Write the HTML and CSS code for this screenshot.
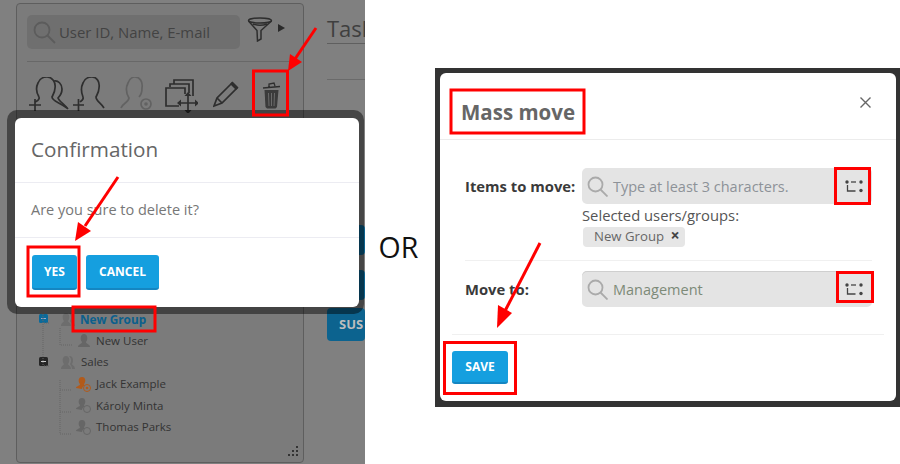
FILE: index.html
```html
<!DOCTYPE html>
<html lang="en">
<head>
<meta charset="utf-8">
<title>Delete or mass move</title>
<link rel="stylesheet" href="styles.css">
</head>
<body>
<div class="stage">
  <section class="shot">
    <aside class="card">
      <div class="search-row">
        <div class="search">
          <svg class="glass" width="24" height="24" viewBox="0 0 24 24"><circle cx="10" cy="10" r="7.500"/><path d="M15.500 15.500 23 23"/></svg>
          <span>User ID, Name, E-mail</span>
        </div>
        <svg class="funnel" width="26" height="25" viewBox="0 0 26 25"><ellipse cx="13" cy="3.500" rx="11.500" ry="2.600"/><path d="M1.500 4 10 13.500 10.500 24 14 22V13.500L24.500 4"/><path d="M6 7Q13 9.500 20 7"/></svg>
        <span class="tri"></span>
      </div>
      <div class="card-rule"></div>
      <div class="tools">
        <svg class="tool" width="40" height="37" viewBox="0 0 40 37"><path d="M0 28h12M6 22v12"/><path d="M10 20C7 15 7 10 9 6 11 1 15 0 18 0c5 0 9 5 8 11 0 4-2 7-3 9 0 4 7 5 15 11"/><path d="M10 20c1 3-2 4-4 5"/><path d="M25 4c4-1 8 3 8 8 0 4-2 7-4 9 1 3 6 6 10 11"/></svg>
        <svg class="tool t2" width="34" height="37" viewBox="0 0 34 37"><path d="M1 28h11M6.500 22v12"/><path d="M11 20C9 15 9 10 11 6c2-5 6-6 9-6 5 0 8 5 7 11 0 4-2 7-3 9 0 4 5 6 8 11"/><path d="M11 20c1 3-2 4-3 5"/></svg>
        <svg class="tool faded" width="32" height="37" viewBox="0 0 32 37"><path d="M1 31C3 26 9 25 9 21 6 16 6 10 8 6c2-5 5-6 7-6 5 0 8 5 7 11 0 4-1 7-3 9"/><circle cx="26" cy="27" r="5"/><circle class="dot" cx="26" cy="27" r="1.800"/></svg>
        <svg class="tool move" width="33" height="34" viewBox="0 0 33 34"><path d="M9 5V1h19v16"/><path d="M5 8V5h19v9"/><path d="M14 27H1V9h19v6"/><path d="M23 16v17M14 24h18"/><path class="fill" d="M23 13l-3.500 4h7zM23 35l-3.500-4h7zM12 24l4-3.500v7zM34 24l-4-3.500v7z"/></svg>
        <svg class="tool pencil" width="26" height="28" viewBox="0 0 26 28"><path d="M19 3 4 18l-3 8 8-3L24 8z"/><path d="M4 18l5 5"/><path class="fill" d="M19.500 1.500 25.500 7.500 23 10 17 4z"/></svg>
        <svg class="trash" width="19" height="27" viewBox="0 0 19 27"><path d="M1 6 18 4.500M7 5V2l5-1 1 3" fill="none"/><path class="fill" d="M2.500 8h14l-1.500 17-1.500 1.500h-8.500L3.500 25z"/><path class="slot" d="M6.500 11l.5 13M9.500 11v13M12.500 11l-.5 13"/></svg>
      </div>
      <ul class="tree">
        <li class="node group open-blue">
          <span class="box"></span>
          <svg class="gico" width="17" height="14" viewBox="0 0 17 14"><path d="M3 14c0-3 3-4 3-5-2-2-2-8 2-8s4 6 2 8c0 1 3 2 3 5zM11 1c4-1 5 5 3 8 0 1 3 2 3 5h-3c0-3-2-4-2-5 2-3 1-6-1-8z"/></svg>
          <strong>New Group</strong>
        </li>
        <li class="node user">
          <svg class="uico" width="14" height="14" viewBox="0 0 14 14"><path d="M1 14c0-3 4-3 4-5-2-2-2-8 2-8s4 6 2 8c0 2 4 2 4 5z"/></svg>
          <span>New User</span>
        </li>
        <li class="node group">
          <span class="box dark"></span>
          <svg class="gico" width="17" height="14" viewBox="0 0 17 14"><path d="M3 14c0-3 3-4 3-5-2-2-2-8 2-8s4 6 2 8c0 1 3 2 3 5zM11 1c4-1 5 5 3 8 0 1 3 2 3 5h-3c0-3-2-4-2-5 2-3 1-6-1-8z"/></svg>
          <span>Sales</span>
        </li>
        <li class="node user">
          <svg class="uico wide orange" width="16" height="16" viewBox="0 0 16 16"><path d="M0 12c0-2 4-2 4-4-2-2-2-7 2-7s4 5 2 7c0 1 .5 1 1 1.500-2 .5-3 2-3 3.500z"/><circle class="ring" cx="11" cy="12" r="3.500"/><circle cx="11" cy="12" r="1.300"/></svg>
          <span>Jack Example</span>
        </li>
        <li class="node user">
          <svg class="uico wide" width="16" height="16" viewBox="0 0 16 16"><path d="M0 12c0-2 4-2 4-4-2-2-2-7 2-7s4 5 2 7c0 1 .5 1 1 1.500-2 .5-3 2-3 3.500z"/><circle class="ring" cx="11" cy="12" r="3.500"/></svg>
          <span>Károly Minta</span>
        </li>
        <li class="node user">
          <svg class="uico wide" width="16" height="16" viewBox="0 0 16 16"><path d="M0 12c0-2 4-2 4-4-2-2-2-7 2-7s4 5 2 7c0 1 .5 1 1 1.500-2 .5-3 2-3 3.500z"/><circle class="ring" cx="11" cy="12" r="3.500"/></svg>
          <span>Thomas Parks</span>
        </li>
      </ul>
      <svg class="guides" width="40" height="125" viewBox="0 0 40 125"><path d="M4 0v52M5 9h6M5 52h6M21 14v17h12M21 66v54h12M21 76h11M21 98h11"/></svg>
      <svg class="grip" width="10" height="10" viewBox="0 0 10 10"><path d="M8 0h2v2H8zM4 4h2v2H4zM8 4h2v2H8zM0 8h2v2H0zM4 8h2v2H4zM8 8h2v2H8z"/></svg>
    </aside>
    <main class="behind">
      <h2 class="task">Task</h2>
      <div class="task-rule"></div>
      <div class="stub s1"></div>
      <div class="stub s2"></div>
      <div class="stub s3">SUS</div>
    </main>
    <div class="frame confirm">
      <div class="dialog">
        <h1 class="confirm-title">Confirmation</h1>
        <p class="confirm-text">Are you sure to delete it?</p>
        <div class="confirm-actions">
          <button class="btn yes">YES</button>
          <button class="btn cancel">CANCEL</button>
        </div>
      </div>
    </div>
  </section>

  <div class="or">OR</div>

  <section class="mass">
    <div class="dialog mass-dialog">
      <header class="mass-head">
        <h1>Mass move</h1>
        <svg class="close" width="11" height="11" viewBox="0 0 11 11"><path d="M.5.5l10 10M10.500.5l-10 10"/></svg>
      </header>
      <div class="mass-body">
        <div class="field first">
          <label>Items to move:</label>
          <div class="field-main">
            <div class="input">
              <svg class="glass light" width="21" height="21" viewBox="0 0 21 21"><circle cx="8.500" cy="8.500" r="7"/><path d="M13.500 13.500 20.500 20.500"/></svg>
              <span class="ph">Type at least 3 characters.</span>
              <svg class="tree-ico" width="18" height="13" viewBox="0 0 18 13"><circle cx="2" cy="2" r="1.700"/><path d="M6 2h5"/><circle cx="16" cy="2" r="1.700"/><path d="M2.500 5v6h8"/><circle cx="16" cy="10.500" r="1.700"/></svg>
            </div>
            <div class="selected">Selected users/groups:</div>
            <div class="tag">New Group <b>×</b></div>
          </div>
        </div>
        <div class="field second">
          <label>Move to:</label>
          <div class="field-main">
            <div class="input sunk">
              <svg class="glass light" width="21" height="21" viewBox="0 0 21 21"><circle cx="8.500" cy="8.500" r="7"/><path d="M13.500 13.500 20.500 20.500"/></svg>
              <span class="val">Management</span>
              <svg class="tree-ico" width="18" height="13" viewBox="0 0 18 13"><circle cx="2" cy="2" r="1.700"/><path d="M6 2h5"/><circle cx="16" cy="2" r="1.700"/><path d="M2.500 5v6h8"/><circle cx="16" cy="10.500" r="1.700"/></svg>
            </div>
          </div>
        </div>
      </div>
      <footer class="mass-foot">
        <button class="btn save">SAVE</button>
      </footer>
    </div>
  </section>

  <svg class="marks" width="900" height="464" viewBox="0 0 900 464">
    <g class="rects">
      <rect x="253.500" y="71" width="34" height="44"/>
      <rect x="28" y="247" width="51" height="49"/>
      <rect x="73" y="307" width="82" height="24"/>
      <rect x="451" y="90" width="133" height="43"/>
      <rect x="835.500" y="168.500" width="34" height="35"/>
      <rect x="837.500" y="272.500" width="35" height="29"/>
      <rect x="444.500" y="342.500" width="71" height="51"/>
    </g>
    <g class="arrows">
      <path d="M316 28 295 59"/><polygon points="288,71 290,54 302,62"/>
      <path d="M118 177 85 226"/><polygon points="75,241 78,222 91,231"/>
      <path d="M540 243 505 311"/><polygon points="497,328 498,305 512,313"/>
    </g>
  </svg>
</div>
</body>
</html>
```

FILE: styles.css
```css
* { box-sizing: border-box; }
html, body { margin: 0; padding: 0; }
body { background: #fff; font-family: "Open Sans", "Noto Sans", sans-serif; }
h1, h2, p, ul { margin: 0; padding: 0; }
ul { list-style: none; }

.stage { position: relative; width: 900px; height: 464px; overflow: hidden; display: flex; }

/* left dimmed screenshot */
.shot { position: relative; flex: 0 0 365px; height: 464px; background: #808080; overflow: hidden; display: flex; align-items: flex-start; padding: 3px 0 0 16px; }
.card { position: relative; flex: 0 0 288px; height: 460px; background: #7b7b7b; border: 1px solid #5e5e5e; border-radius: 4px; padding: 11px 6px 0 10px; }
.search-row { display: flex; align-items: center; }
.search { width: 213px; height: 34px; border-radius: 5px; background: #6f6f6f; display: flex; align-items: center; padding-left: 5px; color: #434343; font-size: 14.900px; }
.search span { margin-left: 3px; }
.glass { fill: none; stroke: #5c5c5c; stroke-width: 1.800; flex: none; }
.funnel { margin-left: 7px; margin-top: -5px; fill: none; stroke: #2e2e2e; stroke-width: 1.500; }
.tri { margin: -8px 0 0 5px; width: 0; height: 0; border-left: 7px solid #2a2a2a; border-top: 4px solid transparent; border-bottom: 4px solid transparent; }
.card-rule { height: 1px; background: #686868; margin-top: 12px; }
.tools { display: flex; align-items: flex-start; margin-top: 15px; height: 37px; }
.tool { fill: none; stroke: #2e2e2e; stroke-width: 1.700; flex: none; }
.tool:first-child { margin-left: 2px; }
.tool.t2 { margin-left: 3px; }
.tool.faded { stroke: #626262; margin-left: 14px; }
.tool.faded .dot { fill: #626262; stroke: none; }
.tool.move { margin-left: 13px; margin-top: 2px; }
.tool .fill { fill: #2e2e2e; stroke: none; }
.tool.pencil { margin-left: 15px; margin-top: 3px; }
.trash { margin-left: 23px; margin-top: 5px; flex: none; stroke: #2e2e2e; stroke-width: 1.300; }
.trash .fill { fill: #3b3b3b; stroke: none; }
.trash .slot { fill: none; stroke: #6a6a6a; stroke-width: 1; }

.tree { margin-top: 194px; margin-left: 12px; font-size: 11.500px; color: #333; }
.node { display: flex; align-items: center; height: 21.600px; }
.group .box { width: 9px; height: 9px; background: #0b6a9a; border-radius: 1.500px; position: relative; margin-right: 10px; flex: none; }
.group .box::after { content: ""; position: absolute; left: 2px; right: 2px; top: 4px; height: 1px; background: #9ac; }
.group .box.dark { background: #262626; }
.group .box.dark::after { background: #ccc; }
.gico { fill: #6d6d6d; flex: none; }
.group strong, .group span:last-child { margin-left: 5px; }
.group span:last-child { margin-left: 6px; }
.group strong { color: #0c5f8c; font-size: 11.800px; }
.user { padding-left: 37px; }
.uico { fill: #666; flex: none; margin-right: 5px; margin-left: 1px; }
.uico.wide { margin-left: 0; margin-right: 4px; }
.uico .ring { fill: none; stroke: #666; stroke-width: 1; }
.uico.orange { fill: #b25a1a; }
.uico.orange .ring { stroke: #b25a1a; }
.guides { position: absolute; left: 22px; top: 310px; fill: none; stroke: #666; stroke-width: 1; stroke-dasharray: 1 1; }
.grip { position: absolute; right: 5px; bottom: 6px; fill: #333; }

.behind { margin-left: 23px; flex: 1; min-width: 0; position: relative; height: 100%; }
.task { font-weight: 400; font-size: 22px; line-height: 30px; color: #3f3f3f; margin-top: 10px; white-space: nowrap; }
.task-rule { height: 1px; background: #5f5f5f; }
.stub { background: #0c638f; border-radius: 4px; color: #bdbdbd; font-weight: 700; font-size: 13px; white-space: nowrap; }
.s1 { height: 30px; margin-top: 181px; }
.s2 { height: 30px; margin-top: 15px; }
.s3 { height: 33px; margin-top: 8px; padding: 7px 0 0 12px; }
.behind::before { content: ""; position: absolute; left: 0; right: 0; top: 76px; height: 1px; background: #6a6a6a; }

.frame { position: absolute; left: 7px; top: 110px; width: 357px; height: 204px; background: rgba(0,0,0,.45); border-radius: 10px; padding: 8px 5px 7px 8px; }
.dialog { background: #fff; border-radius: 6px; height: 100%; }
.confirm-title { font-weight: 400; font-size: 20.700px; color: #666; line-height: 63px; height: 65px; padding-left: 16px; border-bottom: 1px solid #ececf2; }
.confirm-text { height: 55px; line-height: 53px; font-size: 14.500px; color: #777; padding-left: 16px; border-bottom: 1px solid #ececf2; }
.confirm-actions { display: flex; gap: 9px; padding: 17px 0 0 17px; }
.btn { font-family: "Open Sans", sans-serif; font-weight: 700; font-size: 12px; color: #fff; border: 0; border-bottom: 2px solid #1486c2; background: #159fdf; border-radius: 3px; height: 35px; padding: 0; }
.yes { width: 45px; }
.cancel { width: 73px; }

.or { flex: 0 0 70px; font-size: 28.500px; color: #111; text-align: center; padding: 229px 3px 0 0; line-height: 37px; }

/* right window */
.mass { flex: 0 0 465px; height: 339px; margin-top: 68px; background: #333; padding: 5px 4px 6px 5px; }
.mass-dialog { display: flex; flex-direction: column; }
.mass-head { height: 67px; border-bottom: 1px solid #ececec; display: flex; justify-content: space-between; padding: 0 25px 0 21px; }
.mass-head h1 { font-size: 20.500px; font-weight: 700; color: #666; line-height: 78px; }
.close { margin-top: 24px; fill: none; stroke: #666; stroke-width: 1.400; }
.mass-body { padding: 0 24px 0 25px; }
.field { display: flex; }
.field label { flex: 0 0 117px; font-size: 14.800px; font-weight: 700; color: #3a3a3a; }
.first { height: 121px; padding-top: 28px; border-bottom: 1px solid #f0f0f0; }
.first label { line-height: 36px; }
.second { height: 73px; padding-top: 10px; }
.second label { line-height: 36px; }
.field-main { flex: 1; min-width: 0; }
.input { height: 36px; background: #e4e4e4; border-radius: 5px; display: flex; align-items: center; padding: 0 9px 0 5px; font-size: 14.500px; }
.input.sunk { box-shadow: inset 0 1px 0 #cfcfcf; }
.glass.light { stroke: #aaa; }
.ph { margin-left: 5px; flex: 1; color: #8d9298; }
.val { margin-left: 5px; flex: 1; color: #7d8a78; }
.tree-ico { fill: #444; stroke: #444; stroke-width: 1.300; flex: none; }
.tree-ico circle { stroke: none; }
.tree-ico path { fill: none; }
.selected { font-size: 14.800px; color: #555; line-height: 22px; }
.tag { display: inline-block; margin: 1px 0 0 1px; height: 20px; line-height: 18px; padding: 0 5px 0 11px; background: #e6e6e6; border-radius: 4px; font-size: 13.200px; color: #666; vertical-align: top; }
.tag b { color: #444; font-size: 16px; line-height: 14px; margin-left: 3px; }
.mass-foot { margin: 0 12px; border-top: 1px solid #f0f0f0; padding-top: 16px; }
.save { width: 56px; height: 33px; }

/* red annotations */
.marks { position: absolute; left: 0; top: 0; pointer-events: none; }
.rects rect { fill: none; stroke: #f00; stroke-width: 3; }
.arrows path { stroke: #f00; stroke-width: 3; fill: none; }
.arrows polygon { fill: #f00; }
```
